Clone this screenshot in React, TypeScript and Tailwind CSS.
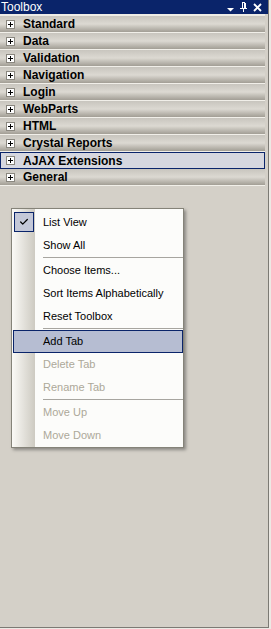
import { Check } from "lucide-react";

const tabs = [
  "Standard",
  "Data",
  "Validation",
  "Navigation",
  "Login",
  "WebParts",
  "HTML",
  "Crystal Reports",
  "AJAX Extensions",
  "General",
];

type Item = { label?: string; sep?: boolean; checked?: boolean; active?: boolean; disabled?: boolean };

const menu: Item[] = [
  { label: "List View", checked: true },
  { label: "Show All" },
  { sep: true },
  { label: "Choose Items..." },
  { label: "Sort Items Alphabetically" },
  { label: "Reset Toolbox" },
  { sep: true },
  { label: "Add Tab", active: true },
  { label: "Delete Tab", disabled: true },
  { label: "Rename Tab", disabled: true },
  { sep: true },
  { label: "Move Up", disabled: true },
  { label: "Move Down", disabled: true },
];

function PlusBox() {
  return (
    <svg width="9" height="9" viewBox="0 0 9 9" className="shrink-0">
      <rect x="0.5" y="0.5" width="8" height="8" fill="#ffffff" stroke="#8a877f" />
      <path d="M2 4.5h5M4.5 2v5" stroke="#000" strokeWidth="1" />
    </svg>
  );
}

export default function App() {
  return (
    <div className="relative w-[271px] h-[629px] bg-[#ece9e4] pr-[2px] pb-px font-['Liberation_Sans',Arial,sans-serif]">
      <div className="h-full bg-[#d4d0c8] border-r border-b border-[#7c7a74]">
        {/* title bar */}
        <div className="h-[14px] bg-[#0a246a] flex items-center justify-between pl-px pr-[6px] text-white">
          <span className="text-[12px] leading-none">Toolbox</span>
          <div className="flex items-center gap-[6px]">
            <svg width="7" height="9" viewBox="0 0 7 9">
              <path d="M0 5h7L3.5 8.5z" fill="#fff" />
            </svg>
            <svg width="7" height="10" viewBox="0 0 7 10">
              <path d="M2 0h3v1H2zM2 1h1v5H2zM4 1h1v5H4zM0 6h7v1H0zM3 7h1v3H3zM5 1h1v5H5z" fill="#fff" />
            </svg>
            <svg width="9" height="9" viewBox="0 0 9 9">
              <path d="M1 1l7 7M8 1L1 8" stroke="#fff" strokeWidth="1.8" />
            </svg>
          </div>
        </div>
        <div className="h-[2px] bg-[#eeece6] mr-[3px]" />

        {/* tabs */}
        <div className="flex flex-col mr-[3px]">
          {tabs.map((t) =>
            t === "AJAX Extensions" ? (
              <div
                key={t}
                className="h-[17px] flex items-center gap-[8px] pl-[5px] bg-[#d6d7df] border border-[#0a246a] text-[12px] font-bold text-black"
              >
                <PlusBox />
                <span className="leading-none">{t}</span>
              </div>
            ) : (
              <div
                key={t}
                className="h-[17px] flex items-center gap-[8px] pl-[6px] bg-gradient-to-b from-[#c8c5be] via-[#dcd9d2] to-[#a29e95] border-b border-[#f1efe9] text-[12px] font-bold text-black"
              >
                <PlusBox />
                <span className="leading-none">{t}</span>
              </div>
            )
          )}
        </div>
      </div>

      {/* context menu */}
      <div className="absolute left-[11px] top-[208px] w-[173px] h-[240px] bg-[#fcfcfa] border border-[#858379] shadow-[2px_2px_3px_rgba(0,0,0,0.35)] pt-[2px] flex flex-col text-[11px]">
        <div className="absolute left-0 top-0 bottom-0 w-[23px] bg-gradient-to-r from-[#fbfaf7] to-[#cdcac1]" />
        {menu.map((m, i) =>
          m.sep ? (
            <div key={i} className="relative h-[2px] pl-[31px]">
              <div className="h-px bg-[#a7a59f]" />
            </div>
          ) : (
            <div
              key={i}
              className={
                m.active
                  ? "relative h-[23px] ml-px flex items-center pl-[29px] bg-[#b6bdd2] border border-[#0a246a] text-black"
                  : m.disabled
                  ? "relative h-[23px] flex items-center pl-[31px] text-[#aca899]"
                  : "relative h-[23px] flex items-center pl-[31px] text-black"
              }
            >
              {m.checked && (
                <div className="absolute left-[2px] top-px w-[20px] h-[20px] bg-[#c4c8d8] border border-[#0a246a] flex items-center justify-center">
                  <Check size={10} strokeWidth={3} color="#000" />
                </div>
              )}
              <span className="leading-none">{m.label}</span>
            </div>
          )
        )}
      </div>
    </div>
  );
}
